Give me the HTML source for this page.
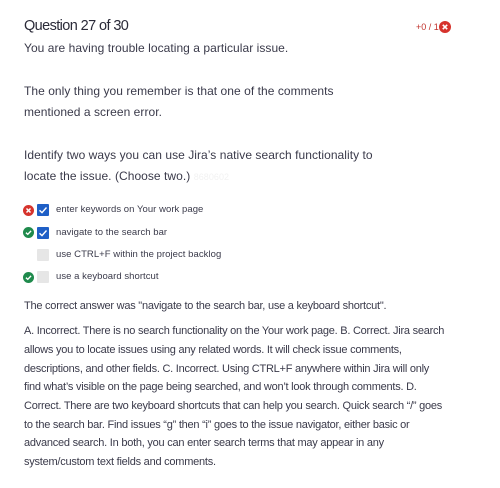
<!DOCTYPE html>
<html><head><style>
body{margin:0;width:500px;height:488px;background:#fff;font-family:"Liberation Sans",sans-serif;color:#3a3a4a;position:relative;overflow:hidden}
.a{position:absolute;white-space:nowrap}
.t{font-size:12px;letter-spacing:0.05px}
.o{font-size:9.5px;letter-spacing:0.05px;left:56px}
.p{font-size:11px;letter-spacing:-0.24px;left:24px}
.cb{position:absolute;left:37px;width:12px;height:12px;border-radius:1px}
.on{background:#1f5fc6}
.off{background:#e6e6e6}
.ic{position:absolute;left:23px;width:11px;height:11px}
</style></head><body>
<div class="a" style="left:24px;top:18px;font-size:14.5px;letter-spacing:-0.6px;color:#2a2a38">Question 27 of 30</div>
<div class="a" style="left:416px;top:22px;font-size:9px;color:#c0312b">+0 / 1</div>
<svg class="a" style="left:439px;top:21px" width="12" height="12" viewBox="0 0 12 12"><circle cx="6" cy="6" r="6" fill="#d6332c"/><path d="M3.8 3.8L8.2 8.2M8.2 3.8L3.8 8.2" stroke="#fff" stroke-width="1.6"/></svg>
<div class="a t" style="left:24px;top:41px">You are having trouble locating a particular issue.</div>
<div class="a t" style="left:24px;top:84px">The only thing you remember is that one of the comments</div>
<div class="a t" style="left:24px;top:105px">mentioned a screen error.</div>
<div class="a t" style="left:24px;top:148px">Identify two ways you can use Jira’s native search functionality to</div>
<div class="a t" style="left:24px;top:169px">locate the issue. (Choose two.) <span style="color:#f2f2f2;font-size:9px">8680602</span></div>

<svg class="ic" style="top:205px" viewBox="0 0 12 12"><circle cx="6" cy="6" r="6" fill="#d6332c"/><path d="M3.8 3.8L8.2 8.2M8.2 3.8L3.8 8.2" stroke="#fff" stroke-width="1.6"/></svg>
<svg class="cb on" style="top:204px" viewBox="0 0 12 12"><path d="M2.5 6.3L5 8.6L9.5 3.5" stroke="#fff" stroke-width="1.4" fill="none"/></svg>
<div class="a o" style="top:204px">enter keywords on Your work page</div>

<svg class="ic" style="top:227px" viewBox="0 0 12 12"><circle cx="6" cy="6" r="6" fill="#1f8a4c"/><path d="M3.2 6.2L5.2 8L8.8 4.2" stroke="#fff" stroke-width="1.5" fill="none"/></svg>
<svg class="cb on" style="top:227px" viewBox="0 0 12 12"><path d="M2.5 6.3L5 8.6L9.5 3.5" stroke="#fff" stroke-width="1.4" fill="none"/></svg>
<div class="a o" style="top:227px">navigate to the search bar</div>

<div class="cb off" style="top:249px"></div>
<div class="a o" style="top:249px">use CTRL+F within the project backlog</div>

<svg class="ic" style="top:272px" viewBox="0 0 12 12"><circle cx="6" cy="6" r="6" fill="#1f8a4c"/><path d="M3.2 6.2L5.2 8L8.8 4.2" stroke="#fff" stroke-width="1.5" fill="none"/></svg>
<div class="cb off" style="top:271px"></div>
<div class="a o" style="top:271px">use a keyboard shortcut</div>

<div class="a p" style="top:300px">The correct answer was "navigate to the search bar, use a keyboard shortcut".</div>
<div class="a p" style="top:325px">A. Incorrect. There is no search functionality on the Your work page. B. Correct. Jira search</div>
<div class="a p" style="top:344px">allows you to locate issues using any related words. It will check issue comments,</div>
<div class="a p" style="top:363px">descriptions, and other fields. C. Incorrect. Using CTRL+F anywhere within Jira will only</div>
<div class="a p" style="top:381px">find what’s visible on the page being searched, and won’t look through comments. D.</div>
<div class="a p" style="top:400px">Correct. There are two keyboard shortcuts that can help you search. Quick search “/” goes</div>
<div class="a p" style="top:419px">to the search bar. Find issues “g” then “i” goes to the issue navigator, either basic or</div>
<div class="a p" style="top:437px">advanced search. In both, you can enter search terms that may appear in any</div>
<div class="a p" style="top:456px">system/custom text fields and comments.</div>
</body></html>
